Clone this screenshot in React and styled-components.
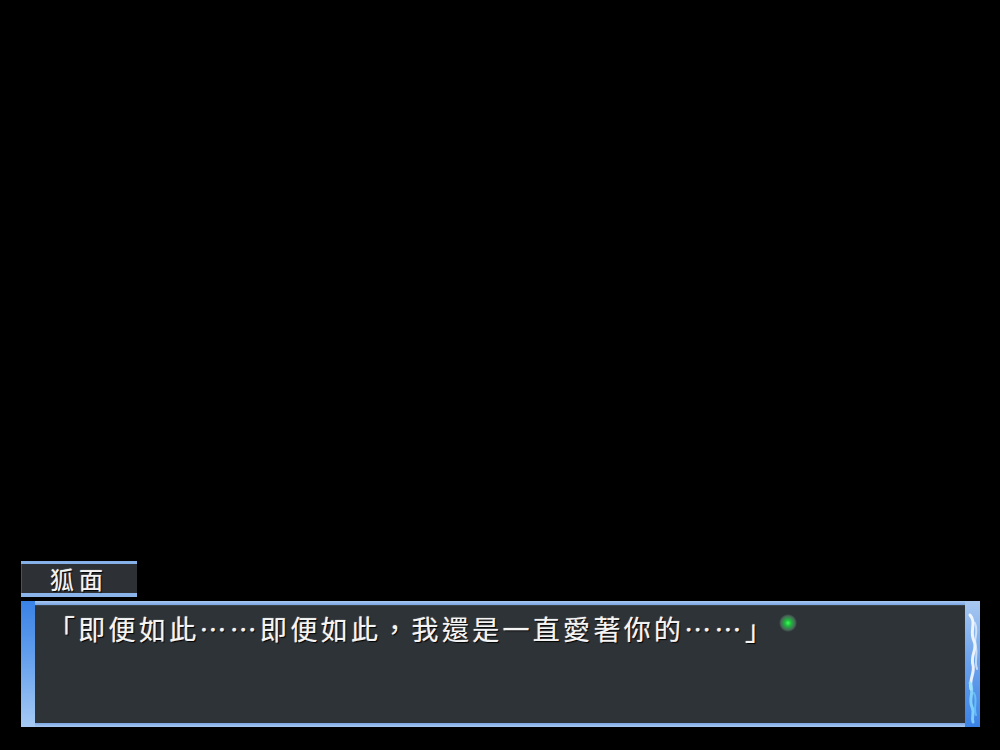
import styled, { createGlobalStyle } from 'styled-components';

const Global = createGlobalStyle`
  html, body {
    margin: 0;
    padding: 0;
    background: #000;
    overflow: hidden;
  }
`

const Screen = styled.div`
  width: 1000px;
  height: 750px;
  background: #000;
  display: flex;
  flex-direction: column;
  justify-content: flex-end;
  padding: 0 20px 23px 21px;
  box-sizing: border-box;
  font-family: "Noto Sans CJK TC", "Noto Sans CJK SC", sans-serif;
`

const NameTab = styled.div`
  width: 116px;
  height: 36px;
  box-sizing: border-box;
  background: #2d3135;
  border-top: 3px solid #86b0e8;
  border-bottom: 4px solid #8ab4ea;
  box-shadow: inset 1px 0 0 #4a5258;
  display: flex;
  align-items: center;
  padding-left: 29px;
  color: #f4f4f4;
  font-size: 24px;
  letter-spacing: 5px;
  text-shadow: 1px 1px 1px #000, 0 0 1px #fff;
  margin-bottom: 4px;
`

const Frame = styled.div`
  height: 126px;
  display: flex;
  box-sizing: border-box;
  padding: 4px 0;
  background: linear-gradient(180deg, #a8c8f0 0, #7aa6e4 4px, #2a5aa0 4px, #2a5aa0 122px, #7ea8e4 122px, #a8c8f0 126px);
`

const Rail = styled.div`
  width: ${({ $w }) => $w}px;
  margin: -4px 0;
  position: relative;
  background: ${({ $side }) =>
    $side === 'left'
      ? 'linear-gradient(180deg, #3a82e6 0%, #5f9cec 40%, #a6caf4 100%)'
      : 'linear-gradient(180deg, #a8c8f0 0%, #6ea4ec 45%, #3b82e6 100%)'};
  svg {
    position: absolute;
    left: 0;
    top: 0;
  }
`

const Panel = styled.div`
  flex: 1;
  background: #2e3337;
  box-shadow: inset 0 1px 0 #3c444a;
  padding: 6px 0 0 13px;
  color: #f4f4f4;
  font-size: 27px;
  line-height: 36px;
  letter-spacing: 3.3px;
  text-shadow: 1px 1px 1px #000, 0 0 1px #fff;
`

const Orb = styled.span`
  display: inline-block;
  width: 18px;
  height: 18px;
  margin-left: 4px;
  vertical-align: 8px;
  border-radius: 50%;
  background: radial-gradient(circle, #3cff5a 0, #1fb83c 25%, rgba(120, 200, 150, 0.35) 55%, rgba(46, 51, 55, 0) 72%);
`

const Flames = () => (
  <svg width="15" height="126" viewBox="0 0 15 126">
    <path d="M5 14 C12 22 4 30 9 40 C13 48 5 54 8 64 C10 72 4 78 6 88" fill="none" stroke="#ffffff" strokeWidth="3" strokeOpacity="0.85" strokeLinecap="round" />
    <path d="M10 22 C14 32 8 38 11 46 C13 54 9 60 12 68" fill="none" stroke="#eaf4ff" strokeWidth="2" strokeOpacity="0.7" strokeLinecap="round" />
    <path d="M5 82 C10 90 3 98 7 106 C10 112 6 116 8 121" fill="none" stroke="#8fe0ff" strokeWidth="3" strokeOpacity="0.8" strokeLinecap="round" />
    <path d="M9 92 C13 100 8 106 11 114" fill="none" stroke="#6fd0ff" strokeWidth="2" strokeOpacity="0.7" strokeLinecap="round" />
  </svg>
)

const App = () => {
  return (
    <Screen>
      <Global />
      <NameTab>狐面</NameTab>
      <Frame>
        <Rail $w={14} $side="left" />
        <Panel>
          「即便如此……即便如此，我還是一直愛著你的……」<Orb />
        </Panel>
        <Rail $w={15} $side="right">
          <Flames />
        </Rail>
      </Frame>
    </Screen>
  )
}

export default App;
